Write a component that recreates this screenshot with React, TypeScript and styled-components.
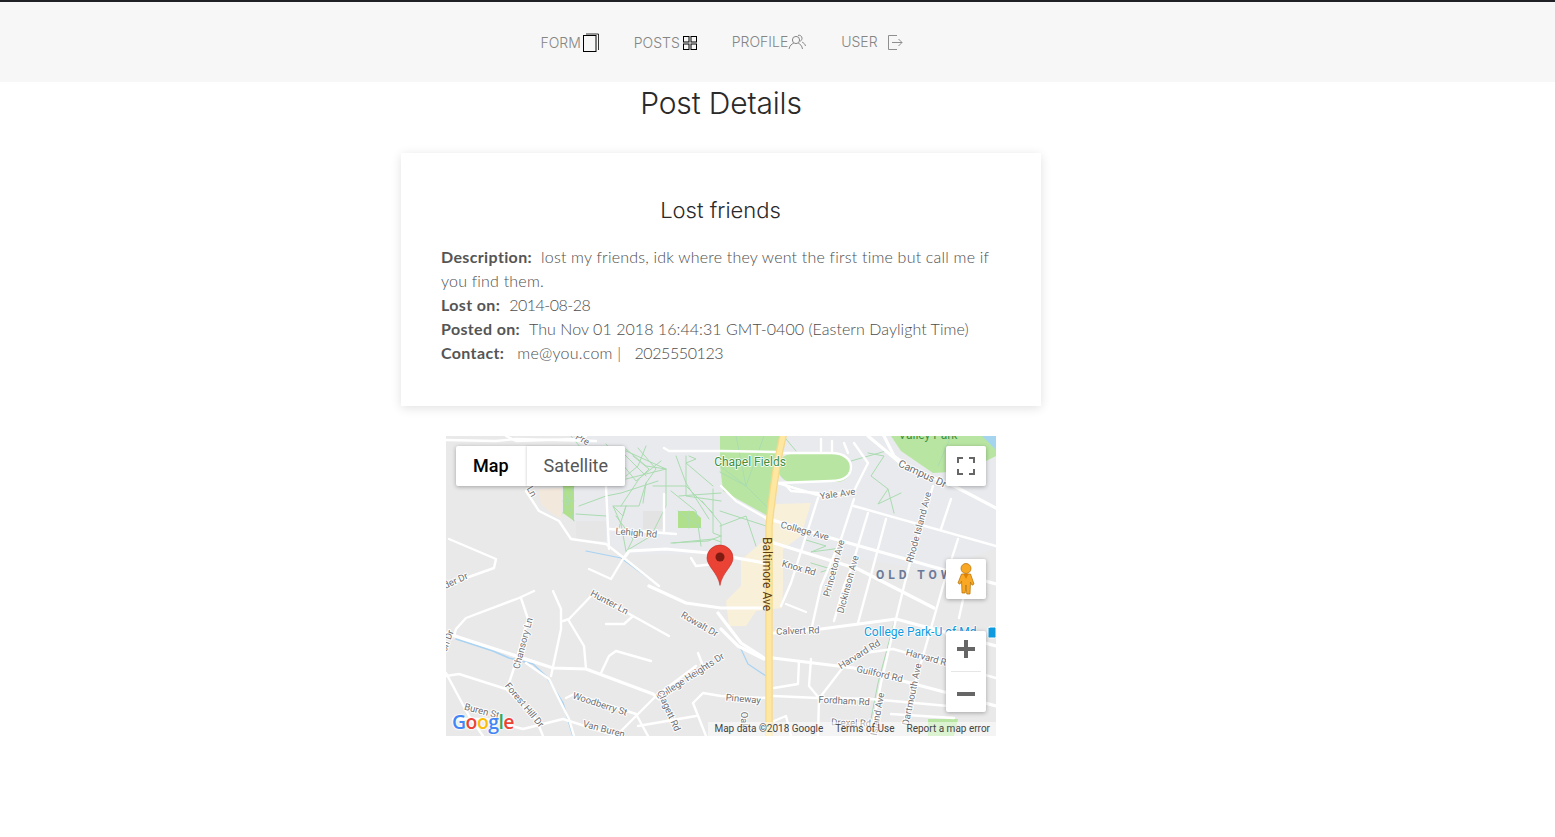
import React from "react";
import styled, { createGlobalStyle } from "styled-components";

const GlobalStyle = createGlobalStyle`
  html, body {
    margin: 0;
    padding: 0;
    background: #fff;
    font-family: "Inter", "Liberation Sans", sans-serif;
  }
`;

const TopBar = styled.header`
  height: 80px;
  border-top: 2px solid #1f2124;
  background: #f7f7f7;
`;

const Nav = styled.nav`
  width: 1443px;
  height: 100%;
  display: flex;
  justify-content: center;
  align-items: center;
  gap: 35px;
`;

const NavItem = styled.a<{ $gap?: number; $drop?: number }>`
  display: flex;
  align-items: center;
  gap: ${(p) => p.$gap ?? 2}px;
  color: #858585;
  font-size: 14px;
  font-weight: 300;
  line-height: 20px;
  position: relative;
  top: ${(p) => p.$drop ?? 0}px;
`;

const Content = styled.main`
  width: 1442px;
  display: flex;
  flex-direction: column;
  align-items: center;
`;

const PageTitle = styled.h1`
  margin: 3px 0 32px;
  height: 36px;
  line-height: 36px;
  font-size: 30px;
  font-weight: 300;
  letter-spacing: -0.15px;
  color: #2a2a2a;
`;

const Card = styled.section`
  width: 640px;
  height: 253px;
  box-sizing: border-box;
  padding: 40px 40px 0;
  background: #fff;
  box-shadow: 0 2px 10px rgba(0, 0, 0, 0.12);
  font-family: "Lato", sans-serif;
  font-size: 16px;
  line-height: 24px;
  font-weight: 300;
  color: #4d4d4d;
`;

const CardTitle = styled.h2`
  margin: 3px 1px 21px 0;
  height: 28px;
  line-height: 28px;
  text-align: center;
  font-family: "Inter", sans-serif;
  font-size: 22px;
  font-weight: 300;
  color: #2a2a2a;
`;

const Line = styled.div``;

const Label = styled.strong<{ $space?: number }>`
  font-weight: 700;
  color: #555;
  letter-spacing: 0.36px;
  margin-right: ${(p) => p.$space ?? 9}px;
`;

const Value = styled.span<{ $space?: number; $track?: number }>`
  letter-spacing: ${(p) => p.$track ?? 0.05}px;
  margin-left: ${(p) => p.$space ?? 0}px;
`;

const MapFrame = styled.div`
  position: relative;
  width: 550px;
  height: 300px;
  margin-top: 30px;
  overflow: hidden;
  background: #e9e9e9;
  font-family: "Roboto", sans-serif;
`;

const MapCanvas = styled.svg`
  display: block;
  width: 550px;
  height: 300px;
  font-family: "Roboto", sans-serif;
`;

const MapTabs = styled.div`
  position: absolute;
  left: 10px;
  top: 10px;
  display: flex;
  height: 40px;
  border-radius: 2px;
  background: #fff;
  box-shadow: 0 1px 4px rgba(0, 0, 0, 0.3);
`;

const MapTab = styled.div<{ $active?: boolean }>`
  display: flex;
  align-items: center;
  padding: 0 ${(p) => (p.$active ? 18 : 17)}px 2px 17px;
  font-size: 18px;
  color: ${(p) => (p.$active ? "#000" : "#565656")};
  font-weight: ${(p) => (p.$active ? 500 : 400)};
  & + & {
    box-shadow: -1px 0 2px rgba(0, 0, 0, 0.12);
  }
`;

const ControlButton = styled.div<{ $top: number }>`
  position: absolute;
  right: 10px;
  top: ${(p) => p.$top}px;
  width: 40px;
  height: 40px;
  display: flex;
  align-items: center;
  justify-content: center;
  border-radius: 2px;
  background: #fff;
  box-shadow: 0 1px 4px rgba(0, 0, 0, 0.3);
`;

const ZoomControl = styled.div`
  position: absolute;
  right: 10px;
  top: 195px;
  width: 40px;
  height: 81px;
  box-sizing: border-box;
  padding-top: 9px;
  display: flex;
  flex-direction: column;
  align-items: center;
  border-radius: 2px;
  background: #fff;
  box-shadow: 0 1px 4px rgba(0, 0, 0, 0.3);
`;

const ZoomDivider = styled.div`
  width: 30px;
  height: 1px;
  margin: 13px 0 20px;
  background: #e6e6e6;
`;

const Attribution = styled.div`
  position: absolute;
  right: 0;
  bottom: 0;
  height: 14px;
  display: flex;
  gap: 12px;
  padding: 0 6px;
  background: rgba(255, 255, 255, 0.5);
  font-size: 10px;
  line-height: 14px;
  color: #444;
`;

const GoogleLogo = styled.div`
  position: absolute;
  left: 6px;
  bottom: 2px;
  font-family: "Open Sans", sans-serif;
  font-size: 19.5px;
  line-height: 24px;
  font-weight: 600;
  letter-spacing: -0.6px;
  text-shadow: 0 0 2px #fff, 0 0 2px #fff, 0 0 3px #fff;
`;

const LogoLetter = styled.span<{ $color: string }>`
  color: ${(p) => p.$color};
`;

const FormIcon = () => (
  <svg width="16" height="20" viewBox="0 0 16 20" fill="none" stroke="#000">
    <rect x="0.5" y="2.5" width="12.5" height="16" strokeWidth="1" />
    <path d="M3 1h12.5v16" strokeWidth="0.8" />
  </svg>
);

const PostsIcon = () => (
  <svg width="14" height="14" viewBox="0 0 14 14" fill="none" stroke="#000" strokeWidth="1">
    <rect x="0.5" y="0.5" width="5.5" height="5.5" />
    <rect x="8" y="0.5" width="5.5" height="5.5" />
    <rect x="0.5" y="8" width="5.5" height="5.5" />
    <rect x="8" y="8" width="5.5" height="5.5" />
  </svg>
);

const ProfileIcon = () => (
  <svg width="18" height="16" viewBox="0 0 18 16" fill="none" stroke="#858585" strokeWidth="1">
    <circle cx="8" cy="6" r="3.6" />
    <path d="M1 15c.6-3.400 3-5.400 4.600-5.600M10.400 9.400c1.800.5 3.600 2.400 4.100 5.600" />
    <path d="M10 1.400c1.900-.6 4 .6 4 2.900 0 1.300-.8 2.500-1.800 3M14.200 8.200c1.500.6 2.800 1.800 3.300 3.800" />
  </svg>
);

const LogoutIcon = () => (
  <svg width="15" height="15" viewBox="0 0 15 15" fill="none" stroke="#8f8f8f" strokeWidth="1">
    <path d="M9 .5H.5v14H9" />
    <path d="M4 7.500h10M10.500 4l3.500 3.500-3.500 3.500" />
  </svg>
);

const FullscreenIcon = () => (
  <svg width="18" height="18" viewBox="0 0 18 18" fill="none" stroke="#666" strokeWidth="2">
    <path d="M1 6V1h5M12 1h5v5M17 12v5h-5M6 17H1v-5" />
  </svg>
);

const PegmanIcon = () => (
  <svg width="20" height="32" viewBox="0 0 20 32" stroke="#b26d00" strokeWidth="0.7">
    <circle cx="10" cy="5.500" r="5" fill="#f9a825" />
    <path d="M5.500 11h9l3.500 10-2 1.200-1.500-3-.5 11.800h-3.200L10 22l-.8 8H6l-.5-11.800-1.500 3-2-1.200z" fill="#f9a825" />
    <path d="M7.500 11l2.500 5 2.500-5z" fill="#e07f00" stroke="none" />
  </svg>
);

const PlusIcon = () => (
  <svg width="18" height="18" viewBox="0 0 18 18" fill="#666">
    <path d="M7 0h4v7h7v4h-7v7H7v-7H0V7h7z" />
  </svg>
);

const MinusIcon = () => (
  <svg width="18" height="4" viewBox="0 0 18 4" fill="#666">
    <rect width="18" height="4" />
  </svg>
);

type Label = { t: string; x: number; y: number; r?: number };

const wideRoads = [
  "M422 0L458 30L508 50L550 72",
  "M438 0L448 20L470 36",
  "M178 122L183 115L220 113L263 117L325 128",
  "M203 150L240 167L275 172L320 172",
  "M327 222L408 232L502 257L550 270",
  "M275 193L292 210L318 223L327 222",
  "M272 177L295 207L318 222",
  "M0 197L107 232L140 233L207 258L213 263",
  "M320 82L385 102L495 133L550 148",
  "M328 107L412 133L488 172",
  "M328 197L375 193L450 183L550 210",
];

const roads = [
  "M0 4L50 5L70 3L150 5",
  "M60 0L70 5L130 3L140 0",
  "M80 55L93 75L113 85L125 103L160 108L178 122L213 150",
  "M160 50L163 113",
  "M143 133L165 143L177 123",
  "M163 93L230 98",
  "M218 58L218 97",
  "M218 12L223 15L275 15L330 16",
  "M245 122L250 130L268 128",
  "M3 103L50 123L48 132L20 142L0 150",
  "M88 155L73 162L20 182L10 193L8 200",
  "M75 162L82 183L68 232L62 250",
  "M107 155L115 173L115 193L105 240",
  "M117 185L123 183L147 158",
  "M123 185L138 210L140 233",
  "M147 158L187 180L223 200",
  "M160 188L178 188L187 180",
  "M155 237L163 220L170 215L205 225",
  "M0 240L13 238L60 253L90 283L97 300",
  "M0 237L23 280L37 300",
  "M7 283L40 283L77 293L117 283L170 300",
  "M120 262L128 258L190 278L202 300",
  "M80 227L103 243L123 283L128 300",
  "M170 300L210 260L250 230",
  "M252 217L257 230",
  "M192 290L250 280",
  "M247 267L257 257L275 260L322 262",
  "M247 267L260 300",
  "M332 47L375 60L408 55L422 27L408 7",
  "M332 17H385C400 17 405 25 405 31C405 38 400 45 385 45L332 47",
  "M275 50L290 65L320 82",
  "M338 47L345 55L372 57",
  "M375 3V15M386 5V15M398 7L402 17",
  "M372 62L345 147L335 170",
  "M408 63L395 103L375 150L365 195",
  "M422 77L405 133L398 150L388 185",
  "M440 83L422 150L412 187",
  "M487 50L465 123L458 150L450 183L435 247L425 300",
  "M505 63L495 93",
  "M512 103L497 150L475 227L458 287",
  "M408 70L550 110",
  "M447 213L508 230L550 242",
  "M375 260L398 230L418 217L447 213",
  "M328 260L372 262L425 263L502 270",
  "M365 223L363 250L373 262L372 300",
  "M353 225L352 248L328 252",
  "M445 278L508 282",
  "M328 285L340 280L345 300",
  "M340 168L360 176",
  "M513 182L520 150",
];

const footpaths = [
  "M180 15L220 33L220 70L205 100L180 115",
  "M187 20L203 33L193 43L175 70",
  "M133 70L160 60L175 57L212 45",
  "M200 47L193 70L167 70L175 88L180 115",
  "M125 0L150 30L175 15L200 40",
  "M160 8L190 45L215 25",
  "M225 55L250 75L255 110",
  "M240 20L240 60L275 65",
  "M225 107L262 105L275 100",
  "M180 70L172 95",
  "M256 65L275 88L275 110",
  "M180 13L200 30L220 33",
  "M192 12L210 33L200 47L197 67",
  "M200 10L192 30L180 40",
  "M180 43L220 33",
  "M207 50L240 50L267 77",
  "M230 20L240 47L263 83",
  "M243 20L250 23L240 27L267 50",
  "M233 60L275 57",
  "M267 53V97L275 100",
  "M227 107L267 103L275 106",
  "M180 70L177 80L167 70",
  "M170 80L187 103L180 117",
  "M130 78L160 80",
  "M274 30L300 50L322 72",
  "M290 0L300 50L274 36",
  "M318 0L300 50",
  "M274 75L320 90",
  "M274 90L300 80L310 110",
  "M340 3L350 15M345 50L360 55",
  "M422 17L438 20L425 40L442 53L432 68L455 57",
  "M442 53L448 77",
  "M405 25L440 15",
  "M360 104L380 110L365 116L395 112",
  "M365 127L385 133L375 136",
  "M448 187L432 247L425 283",
  "M505 0L492 30",
  "M117 50L128 85M128 50L117 77M117 65L128 65",
  "M232 75L255 92M243 75L243 92",
];

const labels: Label[] = [
  { t: "Yale Ave", x: 392, y: 61, r: -8 },
  { t: "College Ave", x: 358, y: 98, r: 15 },
  { t: "Knox Rd", x: 352, y: 135, r: 16 },
  { t: "Rhode Island Ave", x: 476, y: 92, r: -75 },
  { t: "Princeton Ave", x: 391, y: 133, r: -75 },
  { t: "Dickinson Ave", x: 405, y: 149, r: -75 },
  { t: "Calvert Rd", x: 352, y: 198, r: -2 },
  { t: "Hunter Ln", x: 162, y: 169, r: 28 },
  { t: "Rowalt Dr", x: 252, y: 191, r: 30 },
  { t: "Lehigh Rd", x: 190, y: 100, r: 5 },
  { t: "Chansory Ln", x: 80, y: 208, r: -75 },
  { t: "Forest Hill Dr", x: 76, y: 271, r: 50 },
  { t: "Woodberry St", x: 153, y: 271, r: 18 },
  { t: "Van Buren", x: 157, y: 296, r: 15 },
  { t: "Buren St", x: 35, y: 278, r: 15 },
  { t: "College Heights Dr", x: 246, y: 243, r: -33 },
  { t: "Clagett Rd", x: 220, y: 276, r: 66 },
  { t: "Harvard Rd", x: 415, y: 221, r: -32 },
  { t: "Harvard Rd", x: 482, y: 225, r: 15 },
  { t: "Guilford Rd", x: 433, y: 241, r: 13 },
  { t: "Fordham Rd", x: 398, y: 268, r: 3 },
  { t: "Pineway", x: 297, y: 266, r: 5 },
  { t: "Oak", x: 295, y: 284, r: 90 },
  { t: "Dartmouth Ave", x: 469, y: 259, r: -78 },
  { t: "Rhode Island Ave", x: 432, y: 293, r: -80 },
  { t: "Drexel Rd", x: 405, y: 290, r: 2 },
  { t: "on Dr", x: 4, y: 206, r: -70 },
  { t: "ider Dr", x: 10, y: 148, r: -25 },
  { t: "Ln", x: 83, y: 57, r: 60 },
  { t: "Pre", x: 135, y: 6, r: 30 },
];

const MapDrawing = () => (
  <MapCanvas viewBox="0 0 550 300" fill="none" strokeLinecap="round" strokeLinejoin="round">
    <rect width="550" height="300" fill="#e9e9e9" />
    <path d="M127 0H330L322 90L320 118L180 118L160 108L128 85Z" fill="#e8eaed" />
    <path d="M330 0H550V112L490 135L335 110Z" fill="#e8eaed" />
    <path d="M274 0H334L322 80L277 55L274 30Z" fill="#b8e6a2" />
    <rect x="332" y="18" width="73" height="28" rx="14" fill="#b8e6a2" />
    <path d="M445 0L455 15L487 37L520 35L550 20V0Z" fill="#b8e6a2" />
    <path d="M536 0H550V14Z" fill="#a4d4ee" />
    <path d="M117 50H128V85L117 77Z" fill="#b0e08c" />
    <path d="M232 75H248L255 82V92H232Z" fill="#b0e08c" />
    <path d="M93 53L115 52V82L107 78L95 68Z" fill="#f3e8dc" />
    <rect x="197" y="75" width="20" height="18" fill="#e3e3e3" />
    <rect x="130" y="85" width="30" height="20" fill="#e6e6e6" />
    <path d="M330 68L365 67L355 100L337 113V150L336 172L310 175L300 190L283 190L280 165L295 150V124L323 100Z" fill="#f9f0da" />
    <path d="M482 283H512L508 300H482Z" fill="#b8e6a2" />
    {footpaths.map((d) => (
      <path key={d} d={d} stroke="#aadcb0" strokeWidth="1" />
    ))}
    <path d="M10 203L47 215L63 222L87 228L100 240L117 267L127 300" stroke="#a9d3f2" strokeWidth="1.600" />
    <path d="M140 115L175 122L213 150" stroke="#a9d3f2" strokeWidth="1.200" />
    <path d="M295 213L302 228L320 240" stroke="#a9d3f2" strokeWidth="1.200" />
    {wideRoads.map((d) => (
      <path key={d} d={d} stroke="#fff" strokeWidth="3.200" />
    ))}
    {roads.map((d) => (
      <path key={d} d={d} stroke="#fff" strokeWidth="2.400" />
    ))}
    <path d="M337 0C331 25 326 60 323 90V300" stroke="#f6d98a" strokeWidth="7.500" />
    <path d="M337 0C331 25 326 60 323 90V300" stroke="#fee7a0" strokeWidth="5" />
    {labels.map((l) => (
      <text
        key={l.t + l.x}
        x={l.x}
        y={l.y}
        fontSize="9.500"
        fill="#6f7074"
        stroke="#fff"
        strokeWidth="2"
        paintOrder="stroke"
        textAnchor="middle"
        transform={`rotate(${l.r ?? 0} ${l.x} ${l.y})`}
      >
        {l.t}
      </text>
    ))}
    <text x="304" y="30" fontSize="12" fill="#3e8f3e" stroke="#fff" strokeWidth="1.500" paintOrder="stroke" textAnchor="middle">
      Chapel Fields
    </text>
    <text x="482" y="3" fontSize="12" fill="#3e8f3e" textAnchor="middle">
      Valley Park
    </text>
    <text x="475" y="41" fontSize="10.500" fill="#6f7074" stroke="#fff" strokeWidth="2" paintOrder="stroke" textAnchor="middle" transform="rotate(25 475 41)">
      Campus Dr
    </text>
    <text x="317" y="138" fontSize="12" fill="#5c3d12" textAnchor="middle" transform="rotate(90 317 138)">
      Baltimore Ave
    </text>
    <text x="430" y="143" fontSize="12" fontWeight="700" letterSpacing="4" fill="#6b7a99">
      OLD TOWN
    </text>
    <text x="418" y="200" fontSize="12" fill="#0f9ae0" stroke="#fff" strokeWidth="1.500" paintOrder="stroke">
      College Park-U of Md
    </text>
    <rect x="542" y="191" width="8" height="11" rx="1.500" fill="#0f9ae0" stroke="#fff" strokeWidth="1" />
    <path d="M274 149C272 137 261 130 261 122A13 13 0 0 1 287 122C287 130 276 137 274 149Z" fill="#ea4335" stroke="#c5221f" strokeWidth="0.6" />
    <circle cx="274" cy="121" r="4.500" fill="#7d1a12" />
  </MapCanvas>
);

const PostMap = () => (
  <MapFrame>
    <MapDrawing />
    <MapTabs>
      <MapTab $active>Map</MapTab>
      <MapTab>Satellite</MapTab>
    </MapTabs>
    <ControlButton $top={10}>
      <FullscreenIcon />
    </ControlButton>
    <ControlButton $top={123}>
      <PegmanIcon />
    </ControlButton>
    <ZoomControl>
      <PlusIcon />
      <ZoomDivider />
      <MinusIcon />
    </ZoomControl>
    <GoogleLogo>
      <LogoLetter $color="#4285f4">G</LogoLetter>
      <LogoLetter $color="#ea4335">o</LogoLetter>
      <LogoLetter $color="#fbbc05">o</LogoLetter>
      <LogoLetter $color="#4285f4">g</LogoLetter>
      <LogoLetter $color="#34a853">l</LogoLetter>
      <LogoLetter $color="#ea4335">e</LogoLetter>
    </GoogleLogo>
    <Attribution>
      <span>Map data ©2018 Google</span>
      <span>Terms of Use</span>
      <span>Report a map error</span>
    </Attribution>
  </MapFrame>
);

const App: React.FC = () => {
  return (
    <>
      <GlobalStyle />
      <TopBar>
        <Nav>
          <NavItem $drop={1}>
            FORM <FormIcon />
          </NavItem>
          <NavItem $drop={1} $gap={3}>
            POSTS <PostsIcon />
          </NavItem>
          <NavItem $drop={0} $gap={0}>
            PROFILE <ProfileIcon />
          </NavItem>
          <NavItem $drop={0} $gap={10}>
            USER <LogoutIcon />
          </NavItem>
        </Nav>
      </TopBar>
      <Content>
        <PageTitle>Post Details</PageTitle>
        <Card>
          <CardTitle>Lost friends</CardTitle>
          <Line>
            <Label>Description:</Label>
            <Value $track={0.2}>lost my friends, idk where they went the first time but call me if you find them.</Value>
          </Line>
          <Line>
            <Label>Lost on:</Label>
            <Value $track={-0.5}>2014-08-28</Value>
          </Line>
          <Line>
            <Label>Posted on:</Label>
            <Value>Thu Nov 01 2018 16:44:31 GMT-0400 (Eastern Daylight Time)</Value>
          </Line>
          <Line>
            <Label $space={13}>Contact:</Label>
            <Value $track={0.25}>me@you.com |</Value>
            <Value $space={13} $track={-0.4}>2025550123</Value>
          </Line>
        </Card>
        <PostMap />
      </Content>
    </>
  );
};

export default App;
